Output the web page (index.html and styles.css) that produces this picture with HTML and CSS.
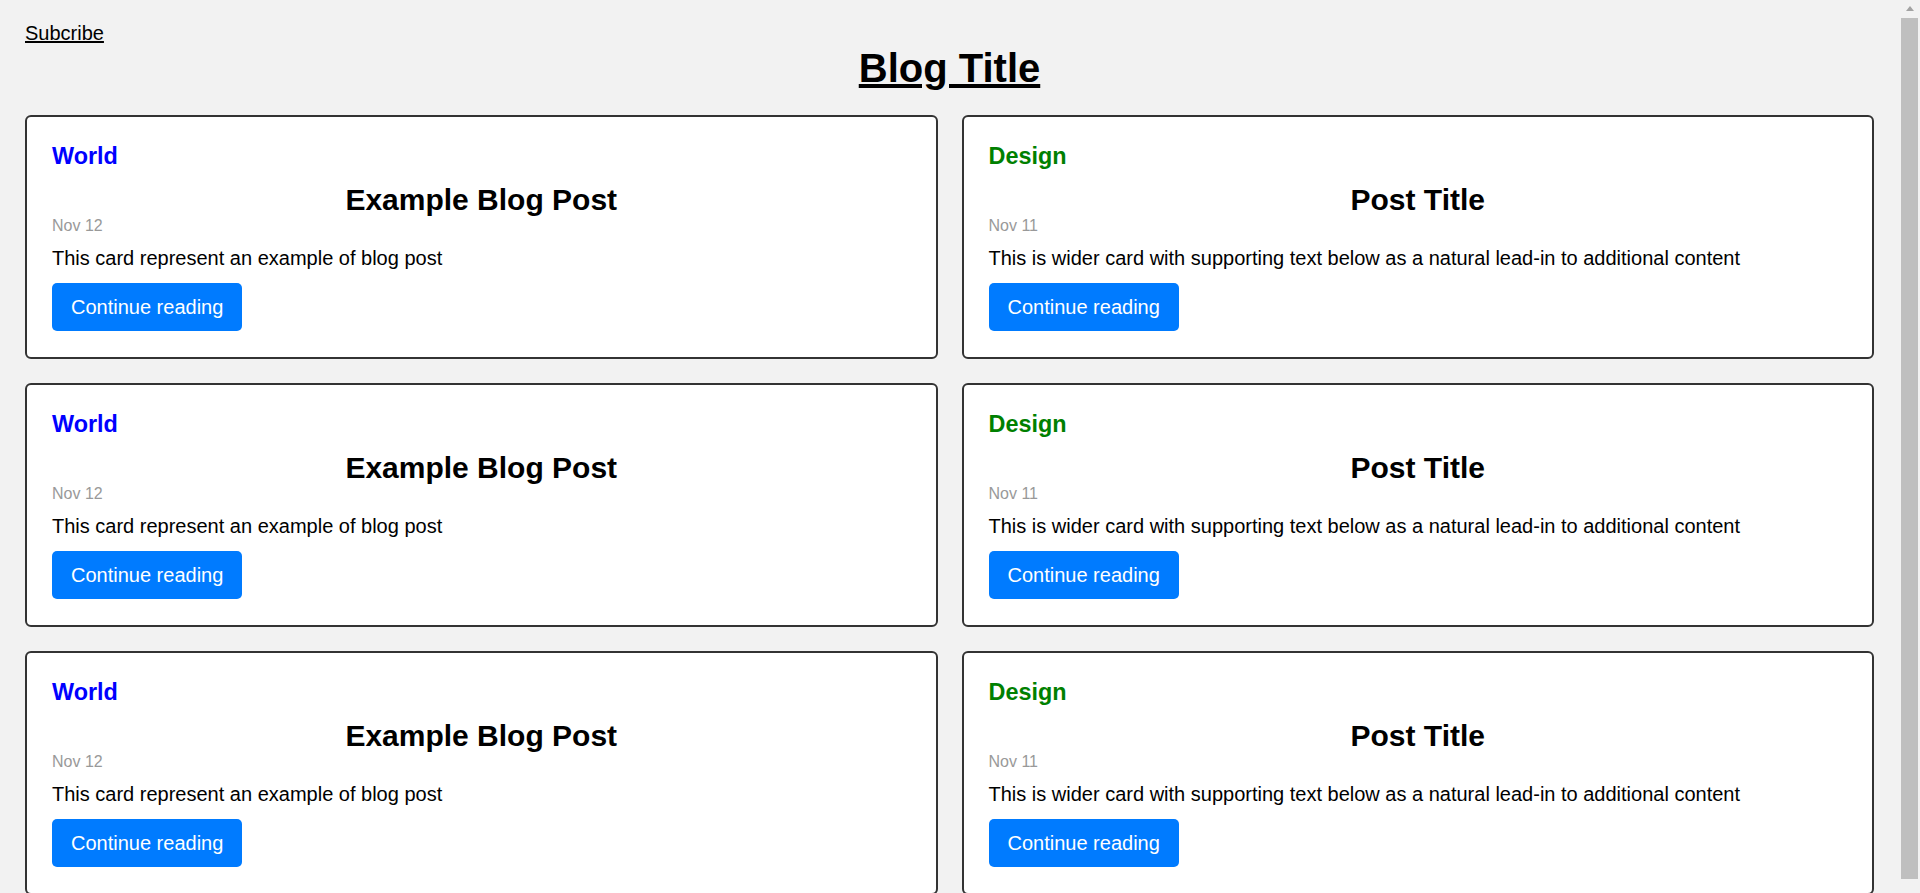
FILE: index.html
```html
<!DOCTYPE html>
<html lang="en">
<head>
<meta charset="utf-8">
<title>Blog</title>
<link rel="stylesheet" href="styles.css">
</head>
<body>
<div class="page">
<header class="top">
  <a class="subscribe" href="#">Subcribe</a>
  <h1 class="blog-title"><a href="#">Blog Title</a></h1>
</header>
<main class="grid">
  <article class="card">
    <h3 class="cat world">World</h3>
    <h2 class="post-title">Example Blog Post</h2>
    <div class="date">Nov 12</div>
    <p class="text">This card represent an example of blog post</p>
    <a class="btn" href="#">Continue reading</a>
  </article>
  <article class="card">
    <h3 class="cat design">Design</h3>
    <h2 class="post-title">Post Title</h2>
    <div class="date">Nov 11</div>
    <p class="text">This is wider card with supporting text below as a natural lead-in to additional content</p>
    <a class="btn" href="#">Continue reading</a>
  </article>
  <article class="card">
    <h3 class="cat world">World</h3>
    <h2 class="post-title">Example Blog Post</h2>
    <div class="date">Nov 12</div>
    <p class="text">This card represent an example of blog post</p>
    <a class="btn" href="#">Continue reading</a>
  </article>
  <article class="card">
    <h3 class="cat design">Design</h3>
    <h2 class="post-title">Post Title</h2>
    <div class="date">Nov 11</div>
    <p class="text">This is wider card with supporting text below as a natural lead-in to additional content</p>
    <a class="btn" href="#">Continue reading</a>
  </article>
  <article class="card">
    <h3 class="cat world">World</h3>
    <h2 class="post-title">Example Blog Post</h2>
    <div class="date">Nov 12</div>
    <p class="text">This card represent an example of blog post</p>
    <a class="btn" href="#">Continue reading</a>
  </article>
  <article class="card">
    <h3 class="cat design">Design</h3>
    <h2 class="post-title">Post Title</h2>
    <div class="date">Nov 11</div>
    <p class="text">This is wider card with supporting text below as a natural lead-in to additional content</p>
    <a class="btn" href="#">Continue reading</a>
  </article>
</main>
</div>
<div class="scrollbar" aria-hidden="true">
  <div class="arrow-area"><span class="arrow-up"></span></div>
  <div class="thumb"></div>
</div>
</body>
</html>
```
FILE: styles.css
```css
html, body {
  margin: 0;
  height: 100%;
  overflow: hidden;
  background: #f2f2f2;
}
body {
  display: flex;
  font-family: "Liberation Sans", Arial, sans-serif;
  font-size: 20px;
  color: #000;
}
.page {
  flex: 1;
  min-width: 0;
  box-sizing: border-box;
  height: 100vh;
  overflow: hidden;
  padding: 22px 27px 25px 25px;
}
.scrollbar {
  width: 17px;
  margin-right: 2px;
  height: 100vh;
  display: flex;
  flex-direction: column;
  padding-bottom: 14px;
  box-sizing: border-box;
}
.arrow-area {
  height: 18px;
  display: flex;
  justify-content: center;
  padding-top: 6px;
  box-sizing: border-box;
}
.arrow-up {
  width: 0;
  height: 0;
  border-left: 4.5px solid transparent;
  border-right: 4.5px solid transparent;
  border-bottom: 5px solid #a3a3a3;
}
.thumb {
  flex: 1;
  background: #bfbfbf;
}
.top {
  display: flex;
  flex-direction: column;
}
.subscribe {
  color: #000;
  text-decoration: underline;
  align-self: flex-start;
  line-height: 23px;
}
.blog-title {
  margin: 0 0 24px;
  font-size: 40px;
  line-height: 46px;
  text-align: center;
}
.blog-title a {
  color: #000;
  text-decoration: underline;
}
.grid {
  display: grid;
  grid-template-columns: 1fr 1fr;
  gap: 24px;
}
.card {
  background: #fff;
  border: 2px solid #333;
  border-radius: 6px;
  padding: 26px 25px 26px;
  display: flex;
  flex-direction: column;
  align-items: flex-start;
}
.cat {
  margin: 0 0 13px;
  font-size: 23.4px;
  line-height: 27px;
  font-weight: bold;
}
.world { color: #0000ff; }
.design { color: #008000; }
.post-title {
  margin: 0;
  align-self: stretch;
  text-align: center;
  font-size: 30px;
  line-height: 34px;
}
.date {
  font-size: 16px;
  line-height: 18px;
  color: #999;
}
.text {
  margin: 12px 0 13px;
  line-height: 23px;
}
.btn {
  display: inline-block;
  background: #007bff;
  color: #fff;
  text-decoration: none;
  padding: 12px 19px;
  line-height: 24px;
  border-radius: 5px;
}
```
